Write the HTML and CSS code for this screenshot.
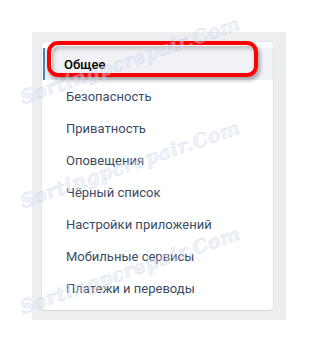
FILE: index.html
```
<!DOCTYPE html>
<html lang="ru">
<head>
    <meta charset="UTF-8">
    <title>Настройки</title>
    <link rel="stylesheet" href="styles.css">
</head>
<body>
    <div class="settings-page">
        <div class="settings-panel">
            <ul class="settings-menu">
                <li class="settings-menu-item settings-menu-item-active">Общее</li>
                <li class="settings-menu-item">Безопасность</li>
                <li class="settings-menu-item">Приватность</li>
                <li class="settings-menu-item">Оповещения</li>
                <li class="settings-menu-item">Чёрный список</li>
                <li class="settings-menu-item">Настройки приложений</li>
                <li class="settings-menu-item">Мобильные сервисы</li>
                <li class="settings-menu-item">Платежи и переводы</li>
            </ul>
            <!-- red marker around the selected item -->
            <div class="settings-highlight"></div>
        </div>

        <div class="watermark watermark-top">Sortingpcrepair.Com</div>
        <div class="watermark watermark-mid">Sortingpcrepair.Com</div>
        <div class="watermark watermark-bottom">Sortingpcrepair.Com</div>
    </div>
</body>
</html>
```

FILE: styles.css
```
body {
    margin: 0;
    background-color: #fff;
    font-family: Roboto, "Open Sans", "DejaVu Sans", sans-serif;
}

.settings-page {
    position: relative;
    width: 318px;
    height: 353px;
    padding: 32px 0 0 32px;
    box-sizing: border-box;
    overflow: hidden;
}

.settings-panel {
    position: relative;
    width: 254px;
    height: 288px;
    padding: 10px 13px 10px 10px;
    box-sizing: border-box;
    background-color: #edeef0;
}

.settings-menu {
    list-style: none;
    margin: 0;
    padding: 6px 0;
    background-color: #fff;
    border-radius: 4px;
    box-shadow: 0 1px 0 0 #d7d8db, 0 0 0 1px #e3e4e8;
}

.settings-menu-item {
    display: flex;
    align-items: center;
    height: 32px;
    padding-left: 22px;
    border-left: 2px solid transparent;
    box-sizing: border-box;
    color: #3b4c63;
    font-size: 13px;
    white-space: nowrap;
}

.settings-menu-item-active {
    margin-left: 1px;
    padding-left: 19px;
    border-left-color: #5181b8;
    background-color: #f0f2f5;
    color: #000;
    font-weight: 500;
}

.settings-highlight {
    position: absolute;
    left: 15px;
    top: 9px;
    width: 211px;
    height: 36px;
    border: 4px solid #f00;
    border-radius: 11px;
    box-sizing: border-box;
    box-shadow: 2px 3px 4px rgba(0, 0, 0, 0.35), inset 1px 1px 0 #fff, inset 2px 3px 4px rgba(0, 0, 0, 0.3);
}

.watermark {
    position: absolute;
    color: rgba(220, 228, 245, 0.45);
    font-family: "DejaVu Serif", serif;
    font-style: italic;
    font-weight: bold;
    font-size: 19px;
    letter-spacing: 0.5px;
    transform: rotate(-19deg);
    transform-origin: left bottom;
    -webkit-text-stroke: 0.5px rgba(160, 178, 220, 0.35);
    white-space: nowrap;
    pointer-events: none;
}

.watermark-top {
    left: 24px;
    top: 86px;
}

.watermark-mid {
    left: 24px;
    top: 190px;
}

.watermark-bottom {
    left: 24px;
    top: 296px;
}
```
